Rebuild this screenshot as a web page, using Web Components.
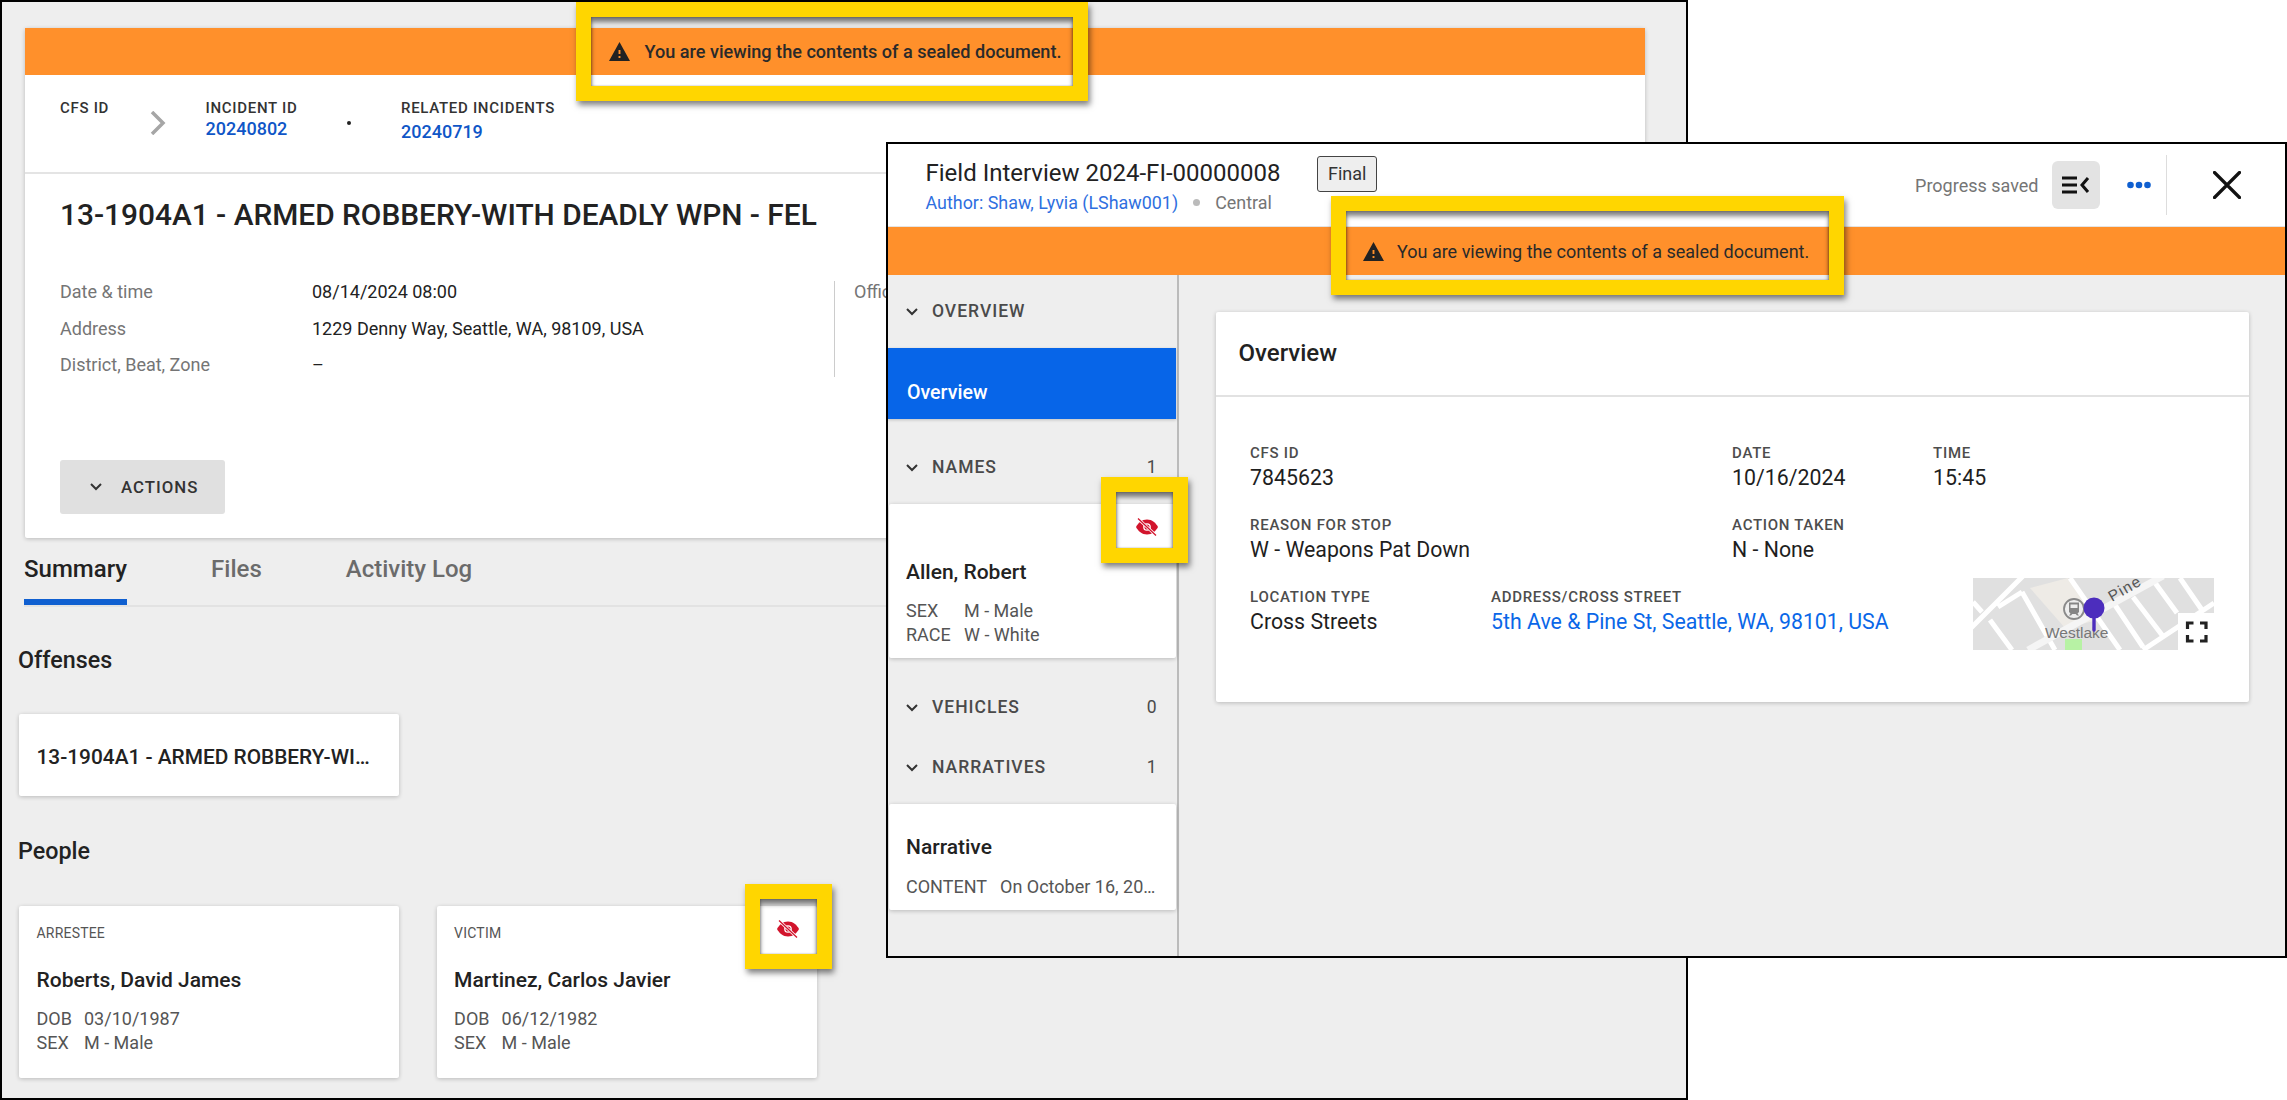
<!DOCTYPE html>
<html>
<head>
<meta charset="utf-8">
<title>Sealed document</title>
<style>
  html, body { margin: 0; background: #fff; }
  body { position: relative; width: 2287px; height: 1100px; overflow: hidden; font-family: Roboto, "Liberation Sans", sans-serif; color: #222; }
</style>
</head>
<body>
<incident-window></incident-window>
<field-window></field-window>
<call-out style="left:576px;top:2px;width:512px;height:99px"></call-out>
<call-out style="left:1331px;top:196px;width:513px;height:99px"></call-out>
<call-out style="left:1101px;top:477px;width:87px;height:86px"></call-out>
<call-out style="left:745px;top:884px;width:87px;height:85px"></call-out>

<script>
// small icons used in a few places
const chevronDown = `<svg width="14" height="9" viewBox="0 0 14 9"><path d="M2 2l5 5 5-5" fill="none" stroke="#333" stroke-width="2"/></svg>`;
const warningIcon = `<svg width="21" height="19" viewBox="1 2 22 19" preserveAspectRatio="none"><path fill="#222" d="M1 21h22L12 2 1 21zm12-3h-2v-2h2v2zm0-4h-2v-4h2v4z"/></svg>`;

class SealedBanner extends HTMLElement {
  connectedCallback() {
    const shadow = this.attachShadow({mode: 'open'});
    shadow.innerHTML = `
      <style>
        :host { display: flex; align-items: center; background: #ff902b; height: var(--banner-h, 47px); padding-left: var(--banner-x, 584px); box-sizing: border-box; }
        svg { flex: none; display: block; }
        span { margin-left: var(--banner-gap, 14.5px); font-size: var(--banner-size, 18.1px); font-weight: var(--banner-weight, 500); color: #2a2a2a; white-space: nowrap; }
      </style>
      ${warningIcon}<span><slot></slot></span>`;
  }
}
customElements.define('sealed-banner', SealedBanner);

class CallOut extends HTMLElement {
  constructor() {
    super();
    this.attachShadow({mode: 'open'}).innerHTML = `
      <style>
        :host { display: block; position: absolute; box-sizing: border-box; border: 15px solid #ffd600; z-index: 5;
          box-shadow: 2px 4px 6px rgba(0,0,0,.5), inset 0 5px 5px rgba(0,0,0,.5), inset 1px 0 2px rgba(0,0,0,.2), inset -1px 0 2px rgba(0,0,0,.2); }
      </style>`;
  }
}
customElements.define('call-out', CallOut);

class EyeOff extends HTMLElement {
  constructor() {
    super();
    this.attachShadow({mode: 'open'}).innerHTML = `
      <style>:host { display: block; width: 22px; height: 22px; } svg { display: block; }</style>
      <svg width="22" height="22" viewBox="0 0 22 22">
        <path fill="#d2142c" d="M11 3.500C6 3.500 2 7 0 11c2 4 6 7.500 11 7.500s9-3.500 11-7.500c-2-4-6-7.500-11-7.500z"/>
        <circle cx="11" cy="11" r="3.200" fill="none" stroke="#fff" stroke-width="1.300"/>
        <path d="M3.500 4l15 14" stroke="#fff" stroke-width="3"/>
        <path d="M2 2.500l18 17" stroke="#d2142c" stroke-width="1.300"/>
      </svg>`;
  }
}
customElements.define('eye-off', EyeOff);

class CrumbField extends HTMLElement {
  connectedCallback() {
    const shadow = this.attachShadow({mode: 'open'});
    shadow.innerHTML = `
      <style>
        :host { display: block; padding-top: 23px; }
        .k { font-size: 15px; line-height: 20px; font-weight: 500; letter-spacing: .7px; color: #333; white-space: nowrap; }
        .v { font-size: 18px; line-height: 24px; font-weight: 500; color: #0f56c7; margin-top: var(--crumb-shift, -1px); }
      </style>
      <div class="k">${this.getAttribute('label')}</div>
      <div class="v"><slot></slot></div>`;
  }
}
customElements.define('crumb-field', CrumbField);

class DetailRow extends HTMLElement {
  connectedCallback() {
    const shadow = this.attachShadow({mode: 'open'});
    shadow.innerHTML = `
      <style>
        :host { display: grid; grid-template-columns: 252px 1fr; line-height: 36.3px; font-size: 18px; }
        .k { color: #757575; } .v { color: #222; }
      </style>
      <div class="k">${this.getAttribute('label')}</div><div class="v"><slot></slot></div>`;
  }
}
customElements.define('detail-row', DetailRow);

class CardLine extends HTMLElement {
  connectedCallback() {
    const shadow = this.attachShadow({mode: 'open'});
    shadow.innerHTML = `
      <style>
        :host { display: flex; font-size: 18px; line-height: 23.5px; color: #555; white-space: nowrap; }
        .k { width: var(--key-w, 47.5px); flex: none; }
      </style>
      <div class="k">${this.getAttribute('label')}</div><div><slot></slot></div>`;
  }
}
customElements.define('card-line', CardLine);

class NameCard extends HTMLElement {
  connectedCallback() {
    const shadow = this.attachShadow({mode: 'open'});
    const role = this.getAttribute('role-name');
    shadow.innerHTML = `
      <style>
        :host { display: block; position: relative; box-sizing: border-box; background: #fff; border-radius: 2px; box-shadow: 0 1px 4px rgba(0,0,0,.22); padding: var(--pad-top, 19px) 0 0 var(--pad-left, 17.5px); }
        .role { font-size: 14px; line-height: 16px; color: #555; letter-spacing: .2px; margin-bottom: 26px; }
        .name { font-size: 21px; line-height: 26px; font-weight: 500; color: #222; margin-bottom: var(--name-gap, 14px); }
        eye-off { position: absolute; top: 12px; right: var(--eye-right, 18px); }
      </style>
      ${role ? `<div class="role">${role}</div>` : ''}
      <div class="name">${this.getAttribute('name')}</div>
      <slot></slot>
      ${this.hasAttribute('sealed') ? '<eye-off></eye-off>' : ''}`;
  }
}
customElements.define('name-card', NameCard);

class SideHead extends HTMLElement {
  connectedCallback() {
    const shadow = this.attachShadow({mode: 'open'});
    const count = this.getAttribute('count');
    shadow.innerHTML = `
      <style>
        :host { display: flex; align-items: center; height: 48px; padding: 0 20px 0 17px; font-size: 17.5px; font-weight: 500; letter-spacing: 1px; color: #4a4a4a; box-sizing: border-box; }
        svg { flex: none; margin-right: 13px; display: block; }
        b { margin-left: auto; font-weight: 400; letter-spacing: 0; }
      </style>
      ${chevronDown}<span><slot></slot></span>${count !== null ? `<b>${count}</b>` : ''}`;
  }
}
customElements.define('side-head', SideHead);

class InfoField extends HTMLElement {
  connectedCallback() {
    const shadow = this.attachShadow({mode: 'open'});
    shadow.innerHTML = `
      <style>
        :host { display: block; }
        .k { font-size: 15px; line-height: 20px; font-weight: 500; letter-spacing: .7px; color: #4d4d4d; white-space: nowrap; margin-bottom: 1.5px; }
        .v { font-size: 21.3px; line-height: 28px; color: var(--value-color, #1e1e1e); white-space: nowrap; }
      </style>
      <div class="k">${this.getAttribute('label')}</div>
      <div class="v"><slot></slot></div>`;
  }
}
customElements.define('info-field', InfoField);

class MapThumb extends HTMLElement {
  constructor() {
    super();
    this.attachShadow({mode: 'open'}).innerHTML = `
      <style>:host { display: block; width: 241px; height: 72px; } svg { display: block; }</style>
      <svg width="241" height="72" viewBox="0 0 241 72">
        <rect width="241" height="72" fill="#e0e0e0"/>
        <path d="M57 10L95 0l30 42-33 8z" fill="#eeebe6"/>
        <g stroke="#fff" fill="none">
          <path stroke-width="5" d="M-2 50L50-2M49 14l33 58M49 14L25 29M97 0l50 72M140 24l30 45M160 19l29 38M180 2l24 33M207 0l22 32M17 42l22 30M0 24l9 10M170 72l71-47"/>
          <path stroke-width="7" stroke="#f5f5f5" d="M55 72L190-2"/>
        </g>
        <rect x="92" y="61" width="17" height="11" fill="#b7f2a4"/>
        <text x="0" y="0" transform="translate(139 24) rotate(-30)" font-family="'Liberation Sans',sans-serif" font-size="15.5" letter-spacing="1.2" fill="#555">Pine</text>
        <circle cx="101" cy="31" r="10" fill="#eee" stroke="#8a8a8a" stroke-width="1.8"/>
        <path fill="#858585" d="M96 24.500h10v9.500l-1.500 1.500 1.500 2h-2l-1.300-1.500h-3.400L98 37.500h-2l1.500-2L96 34z"/>
        <path fill="#eee" d="M97.500 26.500h7V30h-7z"/>
        <text x="72" y="60" font-family="'Liberation Sans',sans-serif" font-size="15.5" fill="#777">Westlake</text>
        <path d="M121 38v14" stroke="#4c2dbd" stroke-width="3.4" stroke-linecap="round"/>
        <circle cx="121" cy="30" r="10.5" fill="#4c2dbd"/>
        <rect x="205" y="35" width="36" height="37" fill="#fff"/>
        <path fill="none" stroke="#222" stroke-width="3.2" d="M214.5 51v-6h6M227 45h6v6M233 57v6h-6M220.5 63h-6v-6"/>
      </svg>`;
  }
}
customElements.define('map-thumb', MapThumb);

class IncidentWindow extends HTMLElement {
  constructor() {
    super();
    this.attachShadow({mode: 'open'}).innerHTML = `
      <style>
        :host { display: block; position: absolute; left: 0; top: 0; width: 1688px; height: 1100px; box-sizing: border-box; border: 2px solid #000; background: #eee; overflow: hidden; font-family: Roboto, "Liberation Sans", sans-serif; }
        .card { margin: 26px 0 0 23px; width: 1620px; height: 510px; background: #fff; border-radius: 2px; box-shadow: 0 1px 4px rgba(0,0,0,.22); }
        .crumbs { height: 97px; border-bottom: 2px solid #e4e4e4; display: flex; padding-left: 35px; }
        .crumbs svg { margin: 36px 0 0 0; flex: none; }
        .dot { width: 4px; height: 4px; border-radius: 50%; background: #222; margin-top: 46px; flex: none; }
        h1 { margin: 20.6px 0 39.8px 35px; font-size: 29.85px; line-height: 40px; font-weight: 500; color: #222; white-space: nowrap; }
        .details { display: flex; padding-left: 35px; }
        .left { width: 774px; }
        .right { border-left: 1px solid #ccc; height: 96px; margin-top: 7px; padding-left: 19px; }
        .right .k { color: #757575; font-size: 18px; line-height: 36.3px; margin-top: -7px; }
        .actions { display: inline-flex; align-items: center; margin: 76.6px 0 0 35px; width: 165px; height: 54px; box-sizing: border-box; padding-left: 29px; background: #e0e0e0; border-radius: 3px; font-size: 16.8px; font-weight: 500; letter-spacing: 1px; color: #333; }
        .actions svg { margin-right: 18px; }
        .tabs { display: flex; gap: 84px; margin-left: 22px; width: 1620px; height: 67px; border-bottom: 2px solid #e2e2e2; }
        .tab { box-sizing: border-box; height: 67px; padding-top: 17px; font-size: 24px; line-height: 28px; color: #6b6b6b; font-weight: 500; }
        .tab.on { color: #222; border-bottom: 6px solid #0f5fd0; }
        h2 { margin: 38px 0 39px 16px; font-size: 23.3px; line-height: 30px; font-weight: 500; color: #222; }
        .offense { display: flex; align-items: center; margin-left: 17px; width: 380px; height: 82px; box-sizing: border-box; padding: 3px 0 0 17.5px; background: #fff; border-radius: 2px; box-shadow: 0 1px 4px rgba(0,0,0,.22); font-size: 20.85px; font-weight: 500; color: #222; white-space: nowrap; }
        .people { display: flex; gap: 37.6px; margin-left: 17px; }
        .people name-card { width: 380px; height: 171.5px; }
        h2.second { margin-top: 40px; margin-bottom: 40px; }
      </style>
      <div class="card">
        <sealed-banner>You are viewing the contents of a sealed document.</sealed-banner>
        <div class="crumbs">
          <crumb-field label="CFS ID" style="width:90px"></crumb-field>
          <svg width="16" height="24" viewBox="0 0 16 24"><path d="M2 1l11 11L2 23" fill="none" stroke="#a6a6a6" stroke-width="3.5"/></svg>
          <crumb-field label="INCIDENT ID" style="margin-left:39.5px;width:141.5px">20240802</crumb-field>
          <div class="dot"></div>
          <crumb-field label="RELATED INCIDENTS" style="margin-left:50px;--crumb-shift:1.5px">20240719</crumb-field>
        </div>
        <h1>13-1904A1 - ARMED ROBBERY-WITH DEADLY WPN - FEL</h1>
        <div class="details">
          <div class="left">
            <detail-row label="Date &amp; time">08/14/2024 08:00</detail-row>
            <detail-row label="Address">1229 Denny Way, Seattle, WA, 98109, USA</detail-row>
            <detail-row label="District, Beat, Zone">–</detail-row>
          </div>
          <div class="right"><div class="k">Officer</div></div>
        </div>
        <div class="actions">${chevronDown}<span>ACTIONS</span></div>
      </div>
      <div class="tabs">
        <div class="tab on">Summary</div><div class="tab">Files</div><div class="tab">Activity Log</div>
      </div>
      <h2>Offenses</h2>
      <div class="offense">13-1904A1 - ARMED ROBBERY-WI…</div>
      <h2 class="second">People</h2>
      <div class="people">
        <name-card role-name="ARRESTEE" name="Roberts, David James">
          <card-line label="DOB">03/10/1987</card-line><card-line label="SEX">M - Male</card-line>
        </name-card>
        <name-card role-name="VICTIM" name="Martinez, Carlos Javier" sealed>
          <card-line label="DOB">06/12/1982</card-line><card-line label="SEX">M - Male</card-line>
        </name-card>
      </div>`;
  }
}
customElements.define('incident-window', IncidentWindow);

class FieldWindow extends HTMLElement {
  constructor() {
    super();
    this.attachShadow({mode: 'open'}).innerHTML = `
      <style>
        :host { display: flex; flex-direction: column; position: absolute; left: 886px; top: 142px; width: 1401px; height: 816px; box-sizing: border-box; border: 2.5px solid #000; background: #eee; z-index: 2; font-family: Roboto, "Liberation Sans", sans-serif; }
        header { flex: none; display: flex; align-items: center; height: 83px; box-sizing: border-box; border-bottom: 1.5px solid #e4e4e4; background: #fff; padding-left: 37.5px; }
        .titles { align-self: flex-start; padding-top: 13.5px; }
        .title { font-size: 24px; line-height: 30px; color: #222; white-space: nowrap; }
        .sub { margin-top: 4px; font-size: 17.9px; line-height: 22px; white-space: nowrap; color: #757575; display: flex; align-items: center; }
        .sub a { color: #2f6fe0; }
        .sub i { width: 7px; height: 7px; border-radius: 50%; background: #bbb; margin: 0 15px; }
        .tag { align-self: flex-start; margin: 11.5px 0 0 36.5px; height: 36px; box-sizing: border-box; padding: 0 10px; border: 1.5px solid #444; border-radius: 3px; background: #eee; font-size: 18px; line-height: 33px; color: #333; }
        .saved { margin-left: auto; font-size: 18px; color: #757575; white-space: nowrap; }
        .panel { margin-left: 13px; width: 48px; height: 48px; border-radius: 6px; background: #e3e3e3; display: flex; align-items: center; justify-content: center; }
        .more { margin-left: 27px; display: block; }
        .rule { margin-left: 15px; width: 1px; height: 60px; background: #ddd; }
        .close { margin: 0 44.5px 0 46px; display: block; }
        .body { flex: 1; display: flex; min-height: 0; }
        aside { flex: none; width: 288.5px; border-right: 2px solid #bbb; padding-top: 12px; box-sizing: content-box; }
        .active { margin: 13px .5px 24px 0; height: 71px; box-sizing: border-box; padding: 32px 0 0 19px; background: #0765e8; color: #fff; font-size: 19.6px; line-height: 26px; font-weight: 500; box-shadow: 0 1px 3px rgba(0,0,0,.2); }
        aside name-card { margin: 13px .5px 25px 1px; --pad-left: 17px; }
        .allen { height: 154px; --pad-top: 55px; --key-w: 58px; }
        .narr { height: 106px; --pad-top: 30px; --name-gap: 15px; --key-w: 94px; }
        .main { flex: 1; padding: 37px 0 0 37px; min-width: 0; }
        .sheet { width: 1033px; height: 390px; background: #fff; border-radius: 2px; box-shadow: 0 1px 4px rgba(0,0,0,.22); }
        .sheet h3 { margin: 0; height: 85px; box-sizing: border-box; padding: 27px 0 0 23px; border-bottom: 2px solid #e2e2e2; font-size: 24px; line-height: 28px; font-weight: 500; color: #222; }
        .grid { display: grid; grid-template-columns: 241px 241px 201px 281px; row-gap: 22.5px; padding: 45.5px 0 0 34.6px; }
        .wide { grid-column: span 2; }
        map-thumb { margin: -9px 0 0 40px; }
      </style>
      <header>
        <div class="titles">
          <div class="title">Field Interview 2024-FI-00000008</div>
          <div class="sub"><a>Author: Shaw, Lyvia (LShaw001)</a><i></i><span>Central</span></div>
        </div>
        <div class="tag">Final</div>
        <div class="saved">Progress saved</div>
        <div class="panel">
          <svg width="28" height="18" viewBox="0 0 28 18"><path d="M0 2h15M0 9h15M0 16h15" stroke="#111" stroke-width="3" fill="none"/><path d="M26 2l-6 7 6 7" stroke="#111" stroke-width="3" fill="none"/></svg>
        </div>
        <svg class="more" width="24" height="8" viewBox="0 0 24 8"><g fill="#0f5fd0"><circle cx="3.5" cy="4" r="3.3"/><circle cx="12" cy="4" r="3.3"/><circle cx="20.5" cy="4" r="3.3"/></g></svg>
        <div class="rule"></div>
        <svg class="close" width="28" height="28" viewBox="0 0 28 28"><path d="M1.5 1.5l25 25M26.5 1.5l-25 25" stroke="#111" stroke-width="3.2" stroke-linecap="round"/></svg>
      </header>
      <sealed-banner style="--banner-h:48px;--banner-x:475px;--banner-weight:400;--banner-gap:13px;--banner-size:18px">You are viewing the contents of a sealed document.</sealed-banner>
      <div class="body">
        <aside>
          <side-head>OVERVIEW</side-head>
          <div class="active">Overview</div>
          <side-head count="1">NAMES</side-head>
          <name-card class="allen" name="Allen, Robert" sealed>
            <card-line label="SEX">M - Male</card-line><card-line label="RACE">W - White</card-line>
          </name-card>
          <side-head count="0">VEHICLES</side-head>
          <side-head count="1" style="margin-top:12px">NARRATIVES</side-head>
          <name-card class="narr" name="Narrative">
            <card-line label="CONTENT">On October 16, 20…</card-line>
          </name-card>
        </aside>
        <div class="main">
          <div class="sheet">
            <h3>Overview</h3>
            <div class="grid">
              <info-field class="wide" label="CFS ID">7845623</info-field>
              <info-field label="DATE">10/16/2024</info-field>
              <info-field label="TIME">15:45</info-field>
              <info-field class="wide" label="REASON FOR STOP">W - Weapons Pat Down</info-field>
              <info-field class="wide" label="ACTION TAKEN">N - None</info-field>
              <info-field label="LOCATION TYPE">Cross Streets</info-field>
              <info-field class="wide" style="--value-color:#0a67e8" label="ADDRESS/CROSS STREET">5th Ave &amp; Pine St, Seattle, WA, 98101, USA</info-field>
              <map-thumb></map-thumb>
            </div>
          </div>
        </div>
      </div>`;
  }
}
customElements.define('field-window', FieldWindow);
</script>
</body>
</html>
